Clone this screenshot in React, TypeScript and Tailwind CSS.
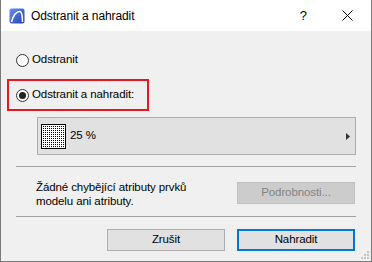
export default function App() {
  return (
    <div className="relative w-[372px] h-[262px] bg-[#f0f0f0] border border-t-0 border-[#7a7a7a] flex flex-col font-['Liberation_Sans',Arial,sans-serif] text-[11.5px] tracking-[-0.1px] text-black">
      {/* title bar */}
      <div className="h-[31px] bg-white flex items-center shrink-0">
        <svg className="ml-[8px]" width="16" height="16" viewBox="0 0 16 16">
          <defs>
            <linearGradient id="ac" x1="0" y1="0" x2="1" y2="1">
              <stop offset="0" stopColor="#6f8ff0" />
              <stop offset="1" stopColor="#1c3fae" />
            </linearGradient>
          </defs>
          <rect x="0.5" y="0.5" width="15" height="15" rx="2" fill="url(#ac)" />
          <path d="M2.5 14 C4 7 8 3 11 3.5 C13 4 13.5 8 13.5 14" fill="none" stroke="#fff" strokeWidth="1.6" />
        </svg>
        <span className="ml-[6px] text-[12px]">Odstranit a nahradit</span>
        <span className="ml-auto text-[13px] mr-[35px]">?</span>
        <svg className="mr-[18px]" width="11" height="11" viewBox="0 0 11 11">
          <path d="M0.5 0.5 L10.5 10.5 M10.5 0.5 L0.5 10.5" stroke="#000" strokeWidth="1" />
        </svg>
      </div>

      <div className="flex-1 flex flex-col px-[15px]">
        {/* radio 1 */}
        <div className="mt-[20px] h-[18px] flex items-center">
          <span className="w-[13px] h-[13px] rounded-full border border-[#333] bg-white" />
          <span className="ml-[3px]">Odstranit</span>
        </div>

        {/* radio 2 in red frame */}
        <div className="mt-[10px] ml-[-9px] w-[142px] h-[32px] border-2 border-[#e5171f] flex items-center pl-[7px]">
          <span className="w-[13px] h-[13px] rounded-full border border-[#333] bg-white flex items-center justify-center">
            <span className="w-[7px] h-[7px] rounded-full bg-[#222]" />
          </span>
          <span className="ml-[3px]">Odstranit a nahradit:</span>
        </div>

        {/* fill bar */}
        <div className="mt-[6px] ml-[21px] w-[319px] h-[38px] bg-[#e1e1e1] border border-[#adadad] flex items-center pl-[3px] pr-[5px]">
          <svg width="25" height="25" viewBox="0 0 25 25">
            <defs>
              <pattern id="dots" width="2" height="2" patternUnits="userSpaceOnUse">
                <rect width="2" height="2" fill="#fff" />
                <rect width="1" height="1" fill="#000" />
              </pattern>
            </defs>
            <rect x="0.5" y="0.5" width="24" height="24" fill="url(#dots)" stroke="#000" />
          </svg>
          <span className="ml-[4px]">25 %</span>
          <svg className="ml-auto" width="4" height="7" viewBox="0 0 4 7">
            <path d="M0 0 L4 3.5 L0 7 Z" fill="#333" />
          </svg>
        </div>

        <div className="mt-[11px] h-px bg-[#a0a0a0]" />

        {/* info row */}
        <div className="mt-[13px] flex items-start">
          <div className="ml-[20px] leading-[14px]">
            <div>Žádné chybějící atributy prvků</div>
            <div>modelu ani atributy.</div>
          </div>
          <div className="ml-auto mr-[1px] mt-[2px] w-[118px] h-[22px] bg-[#cccccc] border border-[#bfbfbf] flex items-center justify-center text-[#838383]">
            Podrobnosti...
          </div>
        </div>

        <div className="mt-[8px] h-px bg-[#a0a0a0]" />

        {/* buttons */}
        <div className="mt-[12px] flex justify-end gap-[12px] mr-[1px]">
          <div className="w-[118px] h-[22px] bg-[#e1e1e1] border border-[#adadad] flex items-center justify-center">
            Zrušit
          </div>
          <div className="w-[118px] h-[22px] bg-[#e1e1e1] border-2 border-[#0078d7] flex items-center justify-center">
            Nahradit
          </div>
        </div>
      </div>

      {/* resize grip */}
      <svg className="absolute right-[2px] bottom-[2px]" width="9" height="9" viewBox="0 0 9 9">
        <rect x="7" y="1" width="2" height="2" fill="#c4c4c4" />
        <rect x="4" y="4" width="2" height="2" fill="#c4c4c4" />
        <rect x="7" y="4" width="2" height="2" fill="#c4c4c4" />
        <rect x="1" y="7" width="2" height="2" fill="#c4c4c4" />
        <rect x="4" y="7" width="2" height="2" fill="#c4c4c4" />
        <rect x="7" y="7" width="2" height="2" fill="#c4c4c4" />
      </svg>
    </div>
  );
}
